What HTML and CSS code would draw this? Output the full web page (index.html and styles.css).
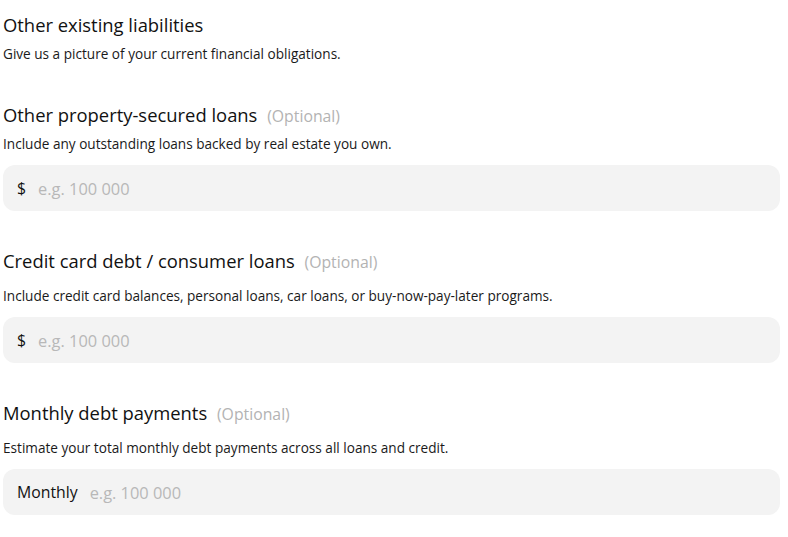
FILE: index.html
```html
<!DOCTYPE html>
<html lang="en">
<head>
<meta charset="utf-8">
<link rel="stylesheet" href="styles.css">
</head>
<body>
<main class="form">
  <section class="intro">
    <h1 class="title">Other existing liabilities</h1>
    <p class="desc">Give us a picture of your current financial obligations.</p>
  </section>

  <section class="field field-first">
    <h2 class="label">Other property-secured loans <span class="opt">(Optional)</span></h2>
    <p class="desc desc-tight">Include any outstanding loans backed by real estate you own.</p>
    <label class="box"><span class="prefix">$</span><input class="input" type="text" placeholder="e.g. 100 000"></label>
  </section>

  <section class="field">
    <h2 class="label">Credit card debt / consumer loans <span class="opt">(Optional)</span></h2>
    <p class="desc">Include credit card balances, personal loans, car loans, or buy-now-pay-later programs.</p>
    <label class="box"><span class="prefix">$</span><input class="input" type="text" placeholder="e.g. 100 000"></label>
  </section>

  <section class="field">
    <h2 class="label">Monthly debt payments <span class="opt">(Optional)</span></h2>
    <p class="desc">Estimate your total monthly debt payments across all loans and credit.</p>
    <label class="box"><span class="prefix">Monthly</span><input class="input" type="text" placeholder="e.g. 100 000"></label>
  </section>
</main>
</body>
</html>
```

FILE: styles.css
```css
* { box-sizing: border-box; }
html, body { margin: 0; padding: 0; background: #ffffff; }
body {
  font-family: "Open Sans", "Noto Sans", sans-serif;
  color: #111111;
}
.form {
  padding: 13px 8px 0 3px;
  display: flex;
  flex-direction: column;
}
.title, .label {
  margin: 0;
  font-weight: 400;
  font-size: 18.4px;
  line-height: 24px;
  color: #111;
}
.desc {
  margin: 0;
  font-size: 13.6px;
  line-height: 18px;
  color: #1a1a1a;
}
.intro .desc { margin-top: 8px; }
.opt {
  font-size: 15.8px;
  color: #b3b3b3;
  margin-left: 5px;
}
.field { display: flex; flex-direction: column; margin-top: 38px; }
.field-first { margin-top: 40px; }
.field .desc { margin-top: 13px; }
.field .desc-tight { margin-top: 7px; }
.box {
  margin-top: 12px;
  height: 46px;
  border-radius: 12px;
  background: #f3f3f3;
  display: flex;
  align-items: center;
  padding: 0 14px;
  gap: 12px;
}
.prefix { font-size: 15.8px; color: #111; }
.input {
  flex: 1;
  border: 0;
  outline: 0;
  background: transparent;
  font-family: inherit;
  font-size: 16.4px;
  color: #111;
  padding: 0;
}
.input::placeholder { color: #b8b8b8; }
```
